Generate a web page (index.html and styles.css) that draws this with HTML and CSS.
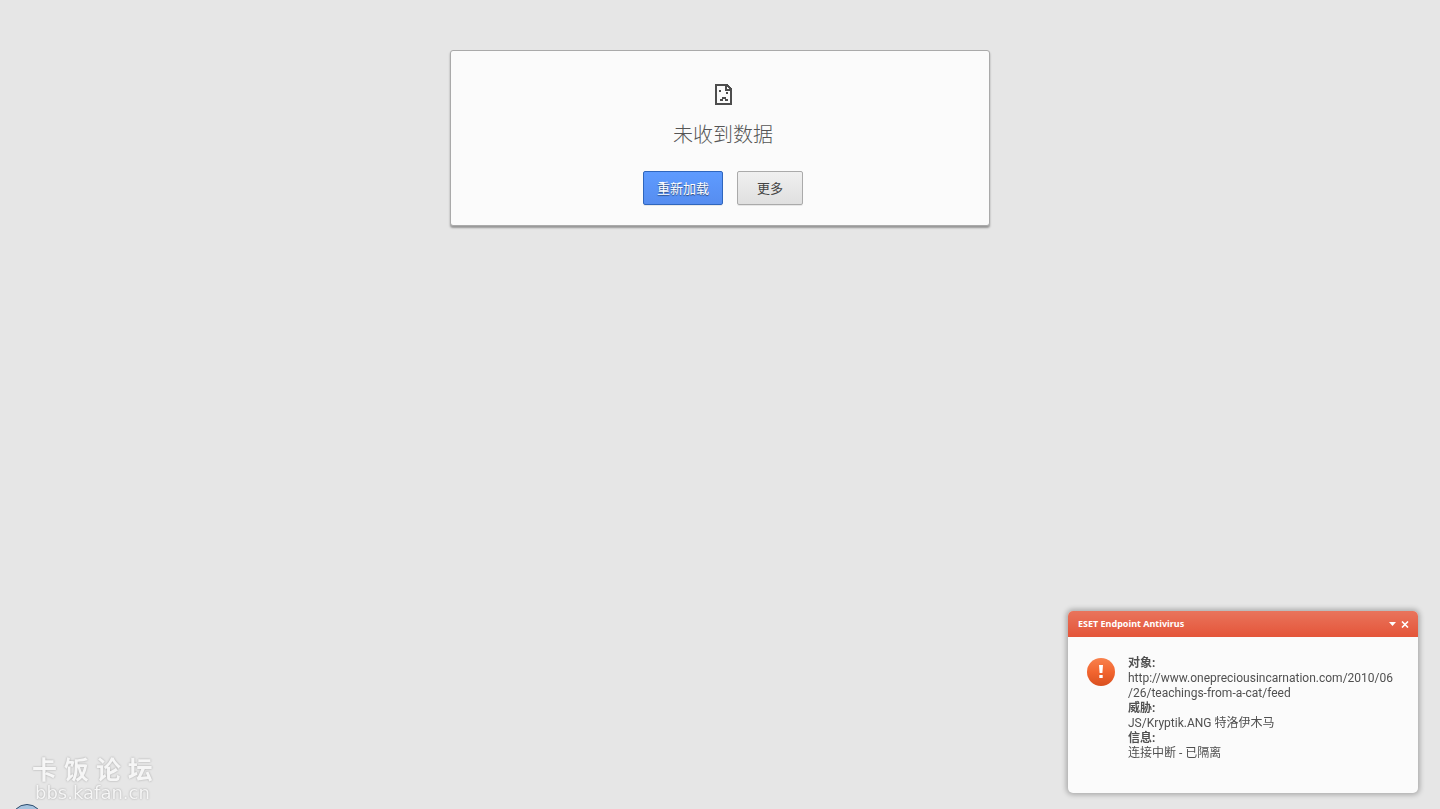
FILE: index.html
```html
<!DOCTYPE html>
<html lang="zh-CN">
<head>
  <meta charset="UTF-8" />
  <meta name="viewport" content="width=device-width, initial-scale=1.0" />
  <title>未收到数据</title>
  <link rel="stylesheet" href="styles.css">
</head>
<body>
  <main class="error-box">
    <svg class="sad-page" width="17" height="21" viewBox="0 0 17 21" shape-rendering="crispEdges" aria-hidden="true">
      <path fill="#4d4d4d" fill-rule="evenodd" d="M0 0h13v1h1v1h1v1h1v1h1v17H0zM2 2v17h13V7h-5V2zM12 3v2h2V4h-1V3z" />
      <path fill="#4d4d4d" d="M4 6h2v2H4zM11 8h2v2h-2zM7 13h4v2H7zM5 15h3v2H5zM10 15h3v2h-3z" />
    </svg>
    <h1>未收到数据</h1>
    <div class="buttons">
      <button type="button" class="btn btn-blue">重新加载</button>
      <button type="button" class="btn">更多</button>
    </div>
  </main>

  <section class="alert">
    <header class="alert-header">
      <h2>ESET Endpoint Antivirus</h2>
      <button type="button" class="alert-icon" aria-label="菜单">
        <svg width="7" height="4" viewBox="0 0 7 4"><path fill="#fff" d="M0 0h7L3.500 4z" /></svg>
      </button>
      <button type="button" class="alert-icon" aria-label="关闭">
        <svg width="8" height="7" viewBox="0 0 8 7"><path stroke="#fff" stroke-width="1.600" d="M1 .5l6 6M7 .5l-6 6" /></svg>
      </button>
    </header>
    <div class="alert-body">
      <svg class="warning" width="28" height="28" viewBox="0 0 28 28" aria-hidden="true">
        <defs>
          <linearGradient id="orange" x1="0" y1="0" x2="0" y2="1">
            <stop offset="0" stop-color="#f8814d" />
            <stop offset="0.5" stop-color="#f2652f" />
            <stop offset="1" stop-color="#d9501f" />
          </linearGradient>
        </defs>
        <circle cx="14" cy="14" r="14" fill="url(#orange)" />
        <path fill="#fff" d="M12 7h4l-.6 8h-2.800zM12.300 17h3.400v3h-3.400z" />
      </svg>
      <dl>
        <dt>对象:</dt>
        <dd>http://www.onepreciousincarnation.com/2010/06<wbr>/26/teachings-from-a-cat/feed</dd>
        <dt>威胁:</dt>
        <dd>JS/Kryptik.ANG 特洛伊木马</dd>
        <dt>信息:</dt>
        <dd>连接中断 - 已隔离</dd>
      </dl>
    </div>
  </section>

  <div class="watermark">
    <div class="watermark-name">卡 饭 论 坛</div>
    <div class="watermark-url">bbs.kafan.cn</div>
  </div>

  <!-- top of the start button -->
  <div class="orb"></div>
</body>
</html>
```

FILE: styles.css
```css
* {
  box-sizing: border-box;
}
body {
  margin: 0;
  min-height: 100vh;
  padding-top: 50px;
  background-color: #e6e6e6;
  font-family: "Liberation Sans", "Noto Sans CJK SC", sans-serif;
  overflow: hidden;
}
.error-box {
  display: flex;
  flex-direction: column;
  align-items: center;
  max-width: 540px;
  margin: 0 auto;
  padding: 33px 14px 20px 20px;
  background: #fbfbfb;
  border: 1px solid #aaa;
  border-radius: 3px;
  box-shadow: 0 2px 2px rgba(0, 0, 0, 0.35);
}
.sad-page {
  display: block;
}
h1 {
  margin: 15px 0 21px;
  font-size: 20px;
  font-weight: 300;
  line-height: 30px;
  color: #555;
}
.buttons {
  display: flex;
  gap: 14px;
}
.btn {
  height: 34px;
  padding: 0 19px 2px;
  border: 1px solid #aaa;
  border-radius: 2px;
  background: linear-gradient(#f0f0f0, #e0e0e0);
  box-shadow: 0 1px 0 rgba(0, 0, 0, 0.08);
  font-family: inherit;
  font-size: 13px;
  color: #444;
  cursor: pointer;
}
.btn-blue {
  padding: 0 13px 2px;
  border-color: #2f66bd;
  background: linear-gradient(#5e9bff, #568df0);
  color: #fff;
  text-shadow: 0 1px 1px rgba(0, 0, 0, 0.5);
}

/* antivirus popup */
.alert {
  position: fixed;
  right: 22px;
  bottom: 16px;
  width: 350px;
  background: #fbfbfb;
  border-radius: 5px;
  box-shadow: 0 0 5px 2px rgba(0, 0, 0, 0.25);
  font-family: Roboto, "Noto Sans CJK SC", sans-serif;
  color: #505050;
}
.alert-header {
  display: flex;
  align-items: center;
  gap: 5px;
  height: 26px;
  padding: 0 9px 0 10px;
  border-radius: 5px 5px 0 0;
  background: linear-gradient(#e9745c, #e45539);
}
.alert-header h2 {
  flex: 1;
  margin: 0;
  padding-bottom: 1px;
  font-family: "Noto Sans", sans-serif;
  font-size: 9px;
  font-weight: 700;
  color: #fff;
}
.alert-icon {
  display: flex;
  padding: 0;
  border: 0;
  background: none;
  cursor: pointer;
}
.alert-body {
  display: flex;
  gap: 13px;
  padding: 19px 19px 32px;
}
.warning {
  flex: none;
  margin-top: 2px;
}
dl {
  margin: 0;
  font-size: 12px;
  line-height: 15px;
}
dt {
  font-weight: 700;
}
dd {
  margin: 0;
}

.watermark {
  position: fixed;
  left: 32px;
  bottom: 8px;
  text-align: center;
  color: #f6f6f6;
  text-shadow: 0 0 2px #999;
}
.watermark-name {
  font-size: 25px;
  font-weight: 700;
  line-height: 30px;
}
.watermark-url {
  font-family: "DejaVu Sans", sans-serif;
  font-size: 18px;
  line-height: 16px;
}
.orb {
  position: fixed;
  left: 11px;
  bottom: -27px;
  width: 32px;
  height: 32px;
  border: 1px solid #2d4a6c;
  border-radius: 50%;
  background: #a5c3df;
}
```
